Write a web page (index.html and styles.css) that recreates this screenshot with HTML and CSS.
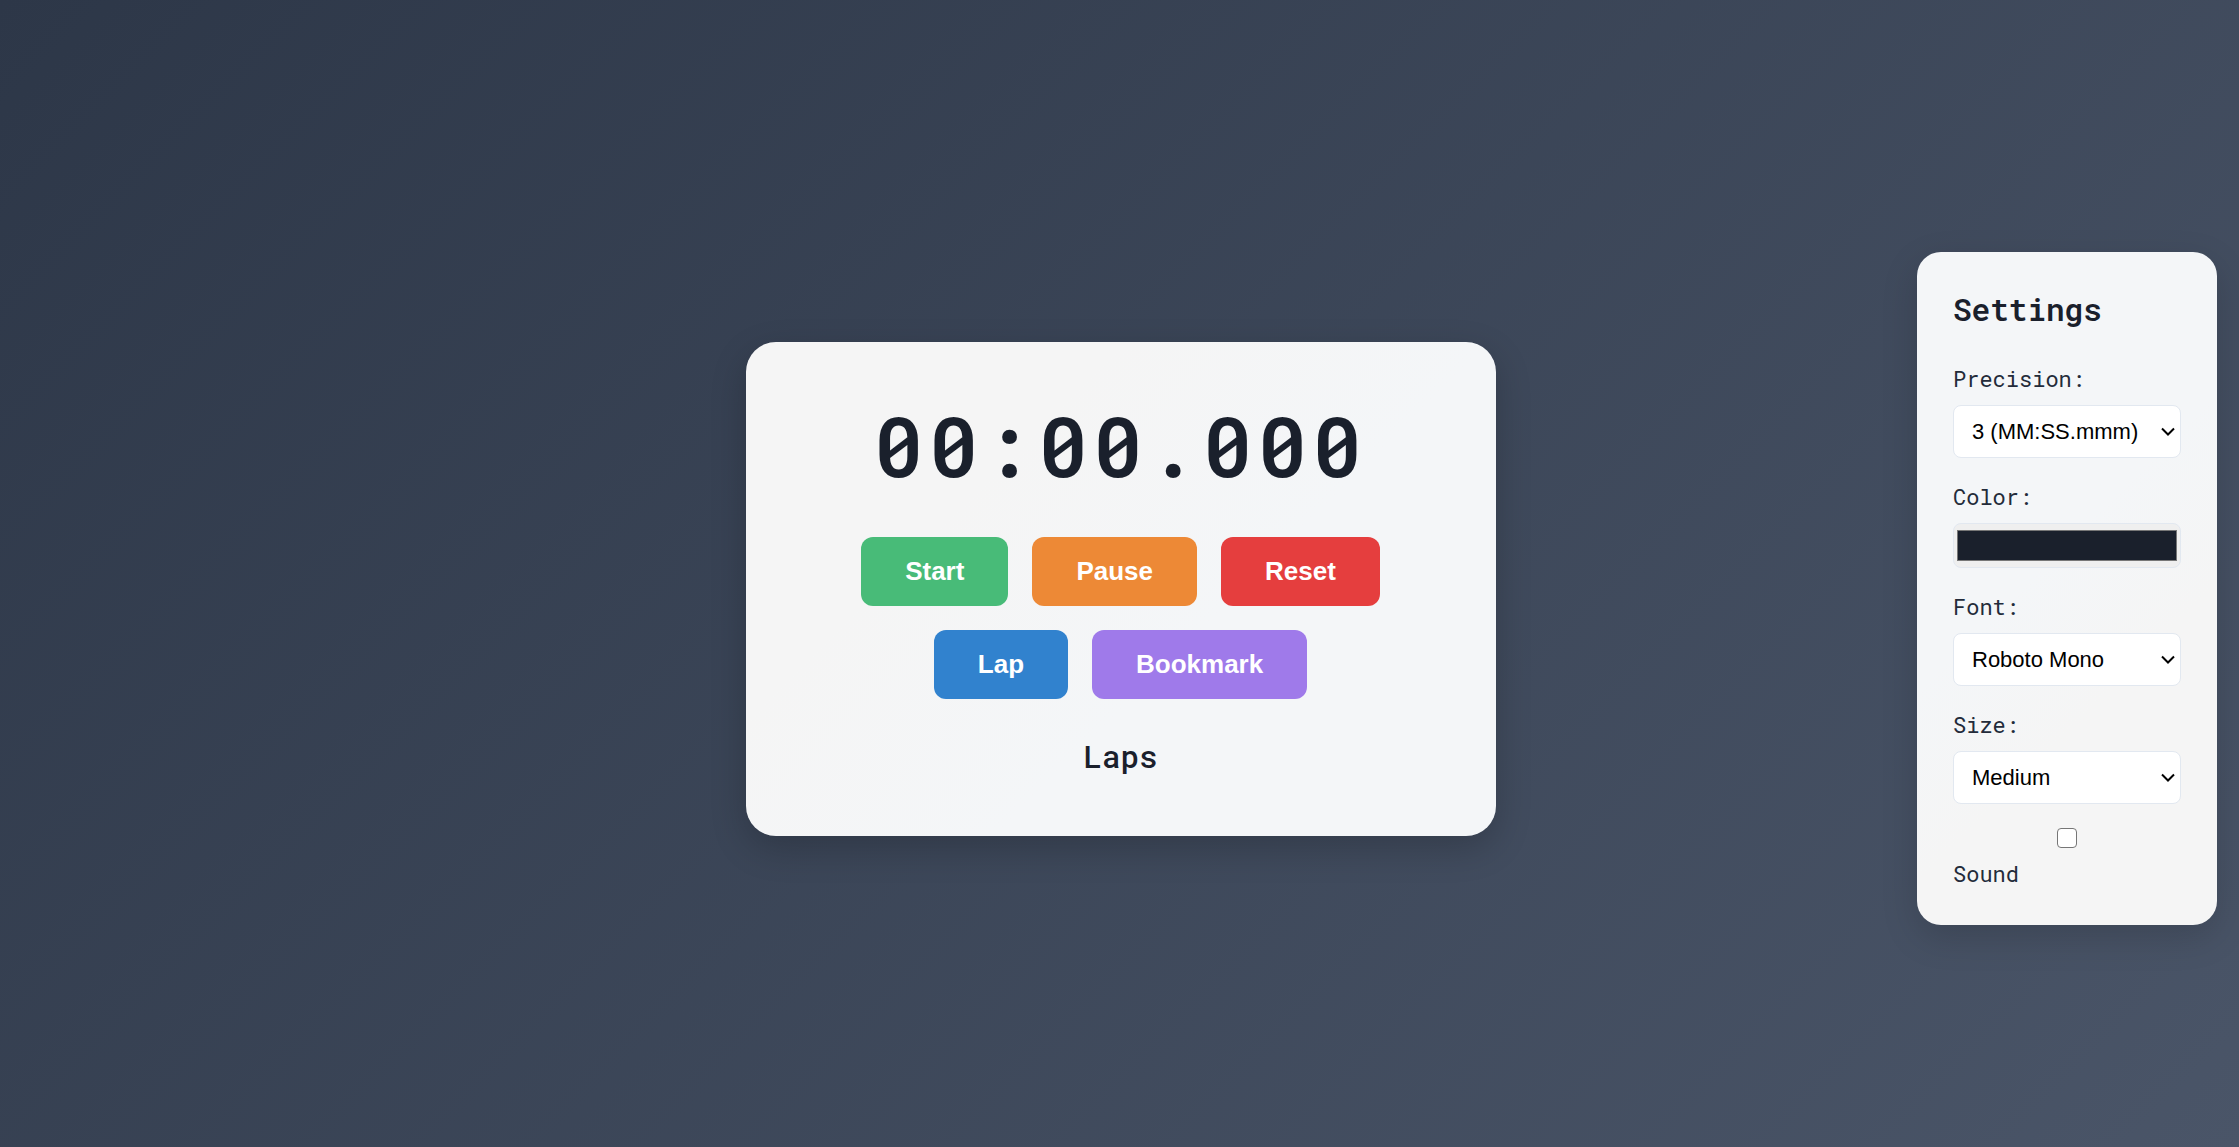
FILE: index.html
```
<!DOCTYPE html>
<html lang="en">
<head>
<meta charset="utf-8">
<meta name="viewport" content="width=device-width, initial-scale=1">
<title>Stopwatch</title>
<link rel="stylesheet" href="styles.css">
</head>
<body>
<div class="page">
  <main class="stopwatch">
    <div class="time" role="timer">00:00.000</div>
    <div class="controls">
      <button type="button" class="btn btn-start">Start</button>
      <button type="button" class="btn btn-pause">Pause</button>
      <button type="button" class="btn btn-reset">Reset</button>
      <button type="button" class="btn btn-lap">Lap</button>
      <button type="button" class="btn btn-bookmark">Bookmark</button>
    </div>
    <h2 class="laps-title">Laps</h2>
  </main>
  <aside class="settings">
    <h2 class="settings-title">Settings</h2>
    <div class="field">
      <label for="precision">Precision:</label>
      <select id="precision" class="control">
        <option>3 (MM:SS.mmm)</option>
        <option>2 (MM:SS.mm)</option>
      </select>
    </div>
    <div class="field">
      <label for="color">Color:</label>
      <input id="color" class="control-color" type="color" value="#1a202c">
    </div>
    <div class="field">
      <label for="font">Font:</label>
      <select id="font" class="control">
        <option>Roboto Mono</option>
        <option>Arial</option>
      </select>
    </div>
    <div class="field">
      <label for="size">Size:</label>
      <select id="size" class="control">
        <option>Small</option>
        <option selected>Medium</option>
        <option>Large</option>
      </select>
    </div>
    <div class="field">
      <input id="sound" class="check" type="checkbox">
      <label for="sound">Sound</label>
    </div>
  </aside>
</div>
</body>
</html>
```
FILE: styles.css
```
*, *::before, *::after { box-sizing: border-box; }

body {
  margin: 0;
  font-family: "Roboto Mono", "DejaVu Sans Mono", monospace;
  color: #1a202c;
  background: linear-gradient(135deg, #2d3748, #4a5568);
}

.page {
  min-height: 100vh;
  padding: 30px 0 0 2px;
  display: grid;
  grid-template-columns: minmax(0, 1fr) minmax(0, 750px) minmax(0, 1fr);
  align-items: center;
}

.stopwatch {
  grid-column: 2;
  padding: 43px 60px 50px;
  border-radius: 30px;
  background: linear-gradient(135deg, #f5f5f5 30%, #f4f6f8 60%);
  box-shadow: 0 12px 36px rgba(0, 0, 0, 0.2);
  text-align: center;
}

.time {
  font-size: 83px;
  font-weight: 600;
  line-height: 120px;
  letter-spacing: 5px;
  margin-bottom: 32px;
}

.controls {
  display: flex;
  flex-wrap: wrap;
  justify-content: center;
  gap: 24px;
}

.btn {
  padding: 0 44px;
  border: 0;
  border-radius: 12px;
  font: bold 26px/69px "Liberation Sans", Arial, sans-serif;
  color: #fff;
}

.btn-start { background: #48bb78; }
.btn-pause { background: #ed8936; }
.btn-reset { background: #e53e3e; }
.btn-lap { background: #3182ce; }
.btn-bookmark { background: #9f7aea; }

.laps-title,
.settings-title {
  margin: 0;
  font-size: 31px;
  line-height: 42px;
}

.laps-title {
  margin-top: 36px;
  margin-bottom: 9px;
  font-weight: 500;
}

.settings {
  justify-self: end;
  width: 300px;
  margin-right: 22px;
  padding: 36px;
  border-radius: 24px;
  background: linear-gradient(135deg, #f4f6f8 45%, #f5f5f5 65%);
  box-shadow: 0 12px 36px rgba(0, 0, 0, 0.15);
}

.settings-title {
  margin-bottom: 34px;
  font-weight: 600;
}

.field {
  display: flex;
  flex-direction: column;
  gap: 11px;
  margin-bottom: 24px;
  font-size: 22px;
  line-height: 30px;
  color: #232b3a;
}

.field:last-child { margin-bottom: 0; }

.control {
  appearance: none;
  width: 100%;
  height: 53px;
  padding: 0 18px;
  border: 1px solid #e2e8f0;
  border-radius: 8px;
  background: #fff url("data:image/svg+xml,%3Csvg xmlns='http://www.w3.org/2000/svg' width='14' height='9' fill='none' stroke='%23000' stroke-width='2'%3E%3Cpath d='M1 1.5l6 6 6-6'/%3E%3C/svg%3E") no-repeat right 5px center;
  color: #000;
  font: 22px "Liberation Sans", Arial, sans-serif;
}

.control-color {
  width: 100%;
  height: 45px;
  padding: 2px 1px;
  border: 1px solid #e2e8f0;
  border-radius: 8px;
  background: #efefef;
}

.check {
  appearance: none;
  align-self: center;
  width: 20px;
  height: 20px;
  margin: 0;
  border: 1px solid #767676;
  border-radius: 4px;
  background: #fff;
}

.check:checked { background: #3182ce; }
```
